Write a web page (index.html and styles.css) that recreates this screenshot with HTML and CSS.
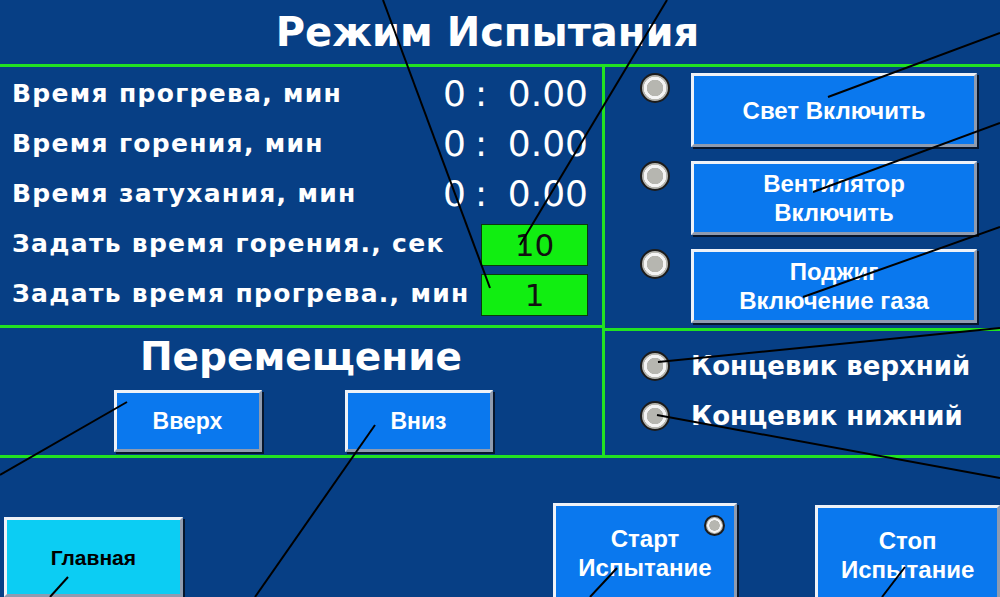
FILE: index.html
```html
<!DOCTYPE html>
<html lang="ru">
<head>
    <meta charset="UTF-8">
    <title>Режим Испытания</title>
    <link rel="stylesheet" href="styles.css">
</head>
<body>

<div class="screen">
    <header class="title">Режим Испытания</header>

    <div class="main">
        <section class="left">
            <div class="timers">
                <div class="row">
                    <span class="label">Время прогрева, мин</span>
                    <span class="time"><span>0</span><span class="colon">:</span><span class="sec">0.00</span></span>
                </div>
                <div class="row">
                    <span class="label">Время горения, мин</span>
                    <span class="time"><span>0</span><span class="colon">:</span><span class="sec">0.00</span></span>
                </div>
                <div class="row">
                    <span class="label">Время затухания, мин</span>
                    <span class="time"><span>0</span><span class="colon">:</span><span class="sec">0.00</span></span>
                </div>
                <div class="row">
                    <span class="label">Задать время горения., сек</span>
                    <span class="setpoint">10</span>
                </div>
                <div class="row">
                    <span class="label">Задать время прогрева., мин</span>
                    <span class="setpoint">1</span>
                </div>
            </div>
            <div class="move">
                <h2>Перемещение</h2>
                <div class="move-btns">
                    <button class="btn btn-move">Вверх</button>
                    <button class="btn btn-move">Вниз</button>
                </div>
            </div>
        </section>

        <section class="right">
            <div class="controls">
                <div class="ctl"><span class="lamp"></span><button class="btn btn-ctl">Свет Включить</button></div>
                <div class="ctl"><span class="lamp"></span><button class="btn btn-ctl">Вентилятор<br>Включить</button></div>
                <div class="ctl"><span class="lamp"></span><button class="btn btn-ctl">Поджиг<br>Включение газа</button></div>
            </div>
            <div class="limits">
                <div class="limit"><span class="lamp"></span>Концевик верхний</div>
                <div class="limit"><span class="lamp"></span>Концевик нижний</div>
            </div>
        </section>
    </div>

    <div class="bottom">
        <button class="btn btn-home">Главная</button>
        <button class="btn btn-test btn-start">Старт<br>Испытание<span class="lamp lamp-sm"></span></button>
        <button class="btn btn-test btn-stop">Стоп<br>Испытание</button>
    </div>

    <!-- leader lines drawn over the panel -->
    <svg class="leaders" width="1000" height="597" viewBox="0 0 1000 597">
        <g stroke="#000" stroke-width="2" fill="none">
            <line x1="383" y1="0" x2="490" y2="288"/>
            <line x1="667" y1="0" x2="520" y2="245"/>
            <line x1="1000" y1="33" x2="828" y2="97"/>
            <line x1="1000" y1="123" x2="813" y2="192"/>
            <line x1="1000" y1="227" x2="803" y2="297"/>
            <line x1="1000" y1="328" x2="658" y2="362"/>
            <line x1="657" y1="415" x2="1000" y2="478"/>
            <line x1="127" y1="402" x2="0" y2="475"/>
            <line x1="375" y1="425" x2="255" y2="597"/>
            <line x1="68" y1="577" x2="50" y2="597"/>
            <line x1="617" y1="568" x2="590" y2="597"/>
            <line x1="905" y1="567" x2="882" y2="597"/>
        </g>
    </svg>
</div>

</body>
</html>
```

FILE: styles.css
```css
body {
    margin: 0;
    background-color: #073f85;
}
.screen {
    position: relative;
    width: 1000px;
    height: 597px;
    overflow: hidden;
    background-color: #073f85;
    color: #fff;
    font-family: "DejaVu Sans", sans-serif;
    font-weight: bold;
}
.title {
    height: 64px;
    line-height: 64px;
    text-align: center;
    padding-right: 25px;
    font-size: 40px;
}
.main {
    display: grid;
    grid-template-columns: 605px 1fr;
    height: 394px;
    box-sizing: border-box;
    border-top: 3px solid #22e222;
    border-bottom: 3px solid #22e222;
}
.left {
    display: flex;
    flex-direction: column;
    border-right: 3px solid #22e222;
}
.timers {
    height: 258px;
    box-sizing: border-box;
    padding: 1px 14px 0 12px;
}
.row {
    display: flex;
    justify-content: space-between;
    align-items: center;
    height: 50px;
}
.label {
    font-size: 25px;
    letter-spacing: 1.3px;
}
.time {
    display: flex;
    width: 145px;
    font-weight: normal;
    font-size: 36px;
}
.colon {
    margin-left: 9px;
}
.sec {
    margin-left: auto;
}
.setpoint {
    align-self: flex-end;
    margin-bottom: 2px;
    width: 107px;
    height: 42px;
    box-sizing: border-box;
    border: 1px solid #0b3a0b;
    background-color: #11ee11;
    color: #111;
    font-weight: normal;
    font-size: 31px;
    line-height: 40px;
    text-align: center;
}
.move {
    flex: 1;
    border-top: 3px solid #22e222;
}
.move h2 {
    margin: 6px 0 0;
    text-align: center;
    font-size: 39px;
    line-height: 46px;
}
.move-btns {
    display: flex;
    justify-content: center;
    gap: 83px;
    margin-top: 10px;
    padding-left: 4px;
}
.right {
    display: flex;
    flex-direction: column;
}
.controls {
    height: 261px;
    box-sizing: border-box;
    padding-top: 6px;
    display: flex;
    flex-direction: column;
    gap: 14px;
}
.ctl {
    display: flex;
    align-items: flex-start;
}
.lamp {
    display: inline-block;
    flex: none;
    width: 30px;
    height: 30px;
    box-sizing: border-box;
    border-radius: 50%;
    border: 2px solid #1c1c1c;
    background: radial-gradient(circle, #b6b6b0 0 8px, #f4f4f4 8.5px 11px, #b6b6b0 11.5px);
}
.ctl .lamp {
    margin: 0 21px 0 35px;
}
.limits {
    flex: 1;
    border-top: 3px solid #22e222;
    padding-top: 10px;
}
.limit {
    display: flex;
    align-items: center;
    height: 50px;
    font-size: 26px;
}
.limit .lamp {
    margin: 0 21px 0 35px;
}
.btn {
    box-sizing: border-box;
    padding: 0;
    border-style: solid;
    border-width: 3px;
    border-color: #eef2f8 #8e9bb0 #8e9bb0 #eef2f8;
    box-shadow: 2px 2px 0 #06152b;
    background-color: #0a78ee;
    color: #fff;
    font-family: "Liberation Sans", Arial, sans-serif;
    font-weight: bold;
    font-size: 24px;
    line-height: 29px;
}
.btn-ctl {
    width: 286px;
    height: 74px;
}
.btn-move {
    width: 148px;
    height: 62px;
    font-size: 23px;
}
.bottom {
    display: flex;
    align-items: flex-start;
}
.btn-home {
    margin: 59px 0 0 4px;
    width: 179px;
    height: 80px;
    background-color: #0ccdf3;
    color: #000;
    font-size: 21px;
}
.btn-test {
    position: relative;
    width: 185px;
    height: 100px;
}
.btn-start {
    margin: 45px 0 0 370px;
}
.btn-stop {
    margin: 47px 0 0 78px;
}
.lamp-sm {
    position: absolute;
    top: 9px;
    right: 9px;
    width: 21px;
    height: 21px;
    background: radial-gradient(circle, #b6b6b0 0 5px, #f4f4f4 5.5px 7px, #b6b6b0 7.5px);
}
.leaders {
    position: absolute;
    left: 0;
    top: 0;
}
```
